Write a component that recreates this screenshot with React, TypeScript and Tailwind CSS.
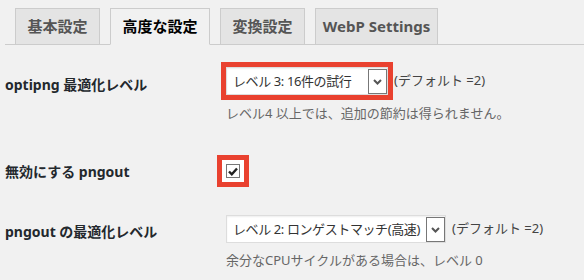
import React from "react";

const tabs = [
  { label: "基本設定", w: "w-[85px]", active: false },
  { label: "高度な設定", w: "w-[100px]", active: true },
  { label: "変換設定", w: "w-[85px]", active: false },
  { label: "WebP Settings", w: "w-[123px]", active: false },
];

function Chevron() {
  return (
    <svg width="9" height="6" viewBox="0 0 9 6" className="block">
      <path d="M1 1l3.5 3.5L8 1" fill="none" stroke="#555" strokeWidth="2" />
    </svg>
  );
}

function Select({ value, width, boxed }: { value: string; width: string; boxed?: boolean }) {
  return (
    <div
      className={[
        "flex h-[28px] items-stretch border border-[#ddd] bg-white shadow-[inset_0_1px_2px_rgba(0,0,0,0.07)]",
        width,
        boxed ? "outline-[5px] outline-solid outline-[#e9412f]" : "",
      ].join(" ")}
    >
      <span className="flex-1 overflow-hidden whitespace-nowrap pl-[6px] text-[13px] leading-[26px] tracking-[-0.4px] text-[#333]">
        {value}
      </span>
      <span className="mt-[1px] flex w-[19px] shrink-0 items-center justify-center border border-[#777] bg-white">
        <Chevron />
      </span>
    </div>
  );
}

export default function App() {
  return (
    <div
      className="h-[280px] w-[584px] overflow-hidden bg-[#f1f1f1] pl-[5px] text-[14px] text-[#23282d]"
      style={{ fontFamily: '"Noto Sans", "Noto Sans CJK JP", sans-serif' }}
    >
      <div className="flex gap-[10px] border-b border-[#ccc] pl-[10px] pt-[8px]">
        {tabs.map((t) => (
          <div
            key={t.label}
            className={[
              "-mb-px flex h-[37px] items-center justify-center border border-[#ccc] text-[15px] font-bold",
              t.w,
              t.active ? "border-b-[#f1f1f1] bg-[#f1f1f1] text-[#000]" : "bg-[#e4e4e4] text-[#555]",
            ].join(" ")}
          >
            {t.label}
          </div>
        ))}
      </div>

      {/* optipng */}
      <div className="flex">
        <div className="w-[221px] shrink-0 pt-[30px] font-bold leading-[20px]">optipng 最適化レベル</div>
        <div className="pt-[22px]">
          <div className="flex items-center">
            <Select value="レベル 3: 16件の試行" width="w-[162px]" boxed />
            <span className="ml-[6px] text-[13px] text-[#444]">(デフォルト =2)</span>
          </div>
          <p className="mt-[8px] text-[13px] leading-[20px] text-[#666]">レベル4 以上では、追加の節約は得られません。</p>
        </div>
      </div>

      {/* pngout disable */}
      <div className="flex">
        <div className="w-[221px] shrink-0 pt-[39px] font-bold leading-[20px]">無効にする pngout</div>
        <div className="pt-[41px]">
          <span className="flex h-[14px] w-[14px] items-center justify-center border border-[#777] bg-white shadow-[0_0_0_4px_#fff,0_0_0_9px_#e9412f]">
            <svg width="10" height="9" viewBox="0 0 10 9" className="block">
              <path d="M1 4.5l2.8 2.8L9 1.5" fill="none" stroke="#222" strokeWidth="2.4" />
            </svg>
          </span>
        </div>
      </div>

      {/* pngout level */}
      <div className="flex">
        <div className="w-[221px] shrink-0 pt-[40px] font-bold leading-[20px]">pngout の最適化レベル</div>
        <div className="pt-[33px]">
          <div className="flex items-center">
            <Select value="レベル 2: ロンゲストマッチ(高速)" width="w-[220px]" />
            <span className="ml-[6px] text-[13px] text-[#444]">(デフォルト =2)</span>
          </div>
          <p className="mt-[7px] text-[13px] leading-[20px] text-[#666]">余分なCPUサイクルがある場合は、レベル 0</p>
        </div>
      </div>
    </div>
  );
}
